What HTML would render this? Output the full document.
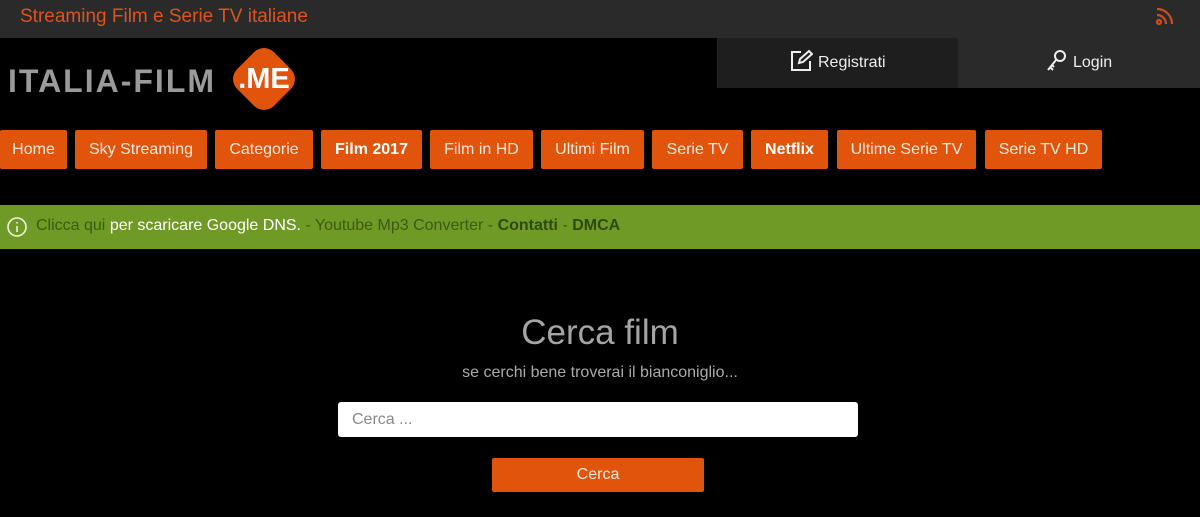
<!DOCTYPE html>
<html><head><meta charset="utf-8"><style>
*{margin:0;padding:0;box-sizing:border-box}
body{width:1200px;height:517px;background:#000;font-family:"Liberation Sans",Arial,sans-serif;position:relative;overflow:hidden}
.a{position:absolute}
.top{left:0;top:0;width:1200px;height:38px;background:#2a2a2a}
.top span{position:absolute;left:20px;top:6px;color:#e0531a;font-size:19px}
.nb{position:absolute;top:130px;height:39px;background:#e0540c;color:#fbe9dd;font-size:16px;line-height:39px;text-align:center;border-radius:2px}
.b{font-weight:bold;color:#fff}
</style></head><body>
<div class="a top"><span>Streaming Film e Serie TV italiane</span>
<svg class="a" style="left:1155px;top:6px" width="20" height="20" viewBox="0 0 20 20" fill="none" stroke="#c9501c" stroke-width="2.2"><circle cx="4" cy="16" r="2"/><path d="M2 9a9 9 0 0 1 9 9M2 3a15 15 0 0 1 15 15"/></svg></div>
<div class="a" style="left:717px;top:38px;width:241px;height:50px;background:#1e1e1e"></div>
<div class="a" style="left:958px;top:38px;width:242px;height:50px;background:#2a2a2a"></div>
<svg class="a" style="left:789px;top:49px" width="24" height="24" viewBox="0 0 24 24" fill="none" stroke="#eee" stroke-width="2"><path d="M12 3H3v18h18v-9"/><path d="M10 14l1-4 9-8 3 3-9 8z"/></svg>
<div class="a" style="left:818px;top:54px;color:#eee;font-size:16px">Registrati</div>
<svg class="a" style="left:1045px;top:48px" width="24" height="26" viewBox="0 0 24 26" fill="none" stroke="#eee" stroke-width="2"><circle cx="15" cy="8" r="5"/><path d="M11 12L3 22M5 19l3 3M7 17l2 2"/></svg>
<div class="a" style="left:1073px;top:54px;color:#eee;font-size:16px">Login</div>
<div class="a" style="left:8px;top:63px;color:#9a9a9a;font-size:32px;font-weight:bold;letter-spacing:2px;white-space:nowrap">ITALIA-FILM</div>
<div class="a" style="left:238px;top:53px;width:52px;height:52px;background:#e0540c;border-radius:14px;transform:rotate(45deg)"></div>
<div class="a" style="left:229px;top:63px;width:70px;text-align:center;color:#fff;font-size:29px;font-weight:bold">.ME</div>
<div class="nb" style="left:0;width:67px">Home</div>
<div class="nb" style="left:75px;width:132px">Sky Streaming</div>
<div class="nb" style="left:215px;width:98px">Categorie</div>
<div class="nb b" style="left:321px;width:101px">Film 2017</div>
<div class="nb" style="left:430px;width:103px">Film in HD</div>
<div class="nb" style="left:541px;width:103px">Ultimi Film</div>
<div class="nb" style="left:652px;width:91px">Serie TV</div>
<div class="nb b" style="left:751px;width:77px">Netflix</div>
<div class="nb" style="left:837px;width:139px">Ultime Serie TV</div>
<div class="nb" style="left:985px;width:117px">Serie TV HD</div>
<div class="a" style="left:0;top:205px;width:1200px;height:44px;background:#6f9a25"></div>
<svg class="a" style="left:6px;top:216px" width="22" height="22" viewBox="0 0 22 22" fill="none" stroke="#f0f0e0" stroke-width="1.6"><circle cx="11" cy="11" r="9"/><path d="M11 10v6M11 6v1.5"/></svg>
<div class="a" style="left:36px;top:217px;font-size:16px;color:#3e5a12">Clicca qui <span style="color:#fff">per scaricare Google DNS.</span> - Youtube Mp3 Converter - <b style="color:#2e4a08">Contatti</b> - <b style="color:#2e4a08">DMCA</b></div>
<div class="a" style="left:0;top:313px;width:1200px;text-align:center;color:#a5a5a5;font-size:35px">Cerca film</div>
<div class="a" style="left:0;top:364px;width:1200px;text-align:center;color:#aaa;font-size:16px">se cerchi bene troverai il bianconiglio...</div>
<div class="a" style="left:338px;top:402px;width:520px;height:35px;background:#fff;border-radius:3px;color:#888;font-size:16px;line-height:35px;padding-left:14px">Cerca ...</div>
<div class="a" style="left:492px;top:458px;width:212px;height:34px;background:#e0540c;border-radius:2px;color:#fbe9dd;font-size:16px;line-height:34px;text-align:center">Cerca</div>
</body></html>
